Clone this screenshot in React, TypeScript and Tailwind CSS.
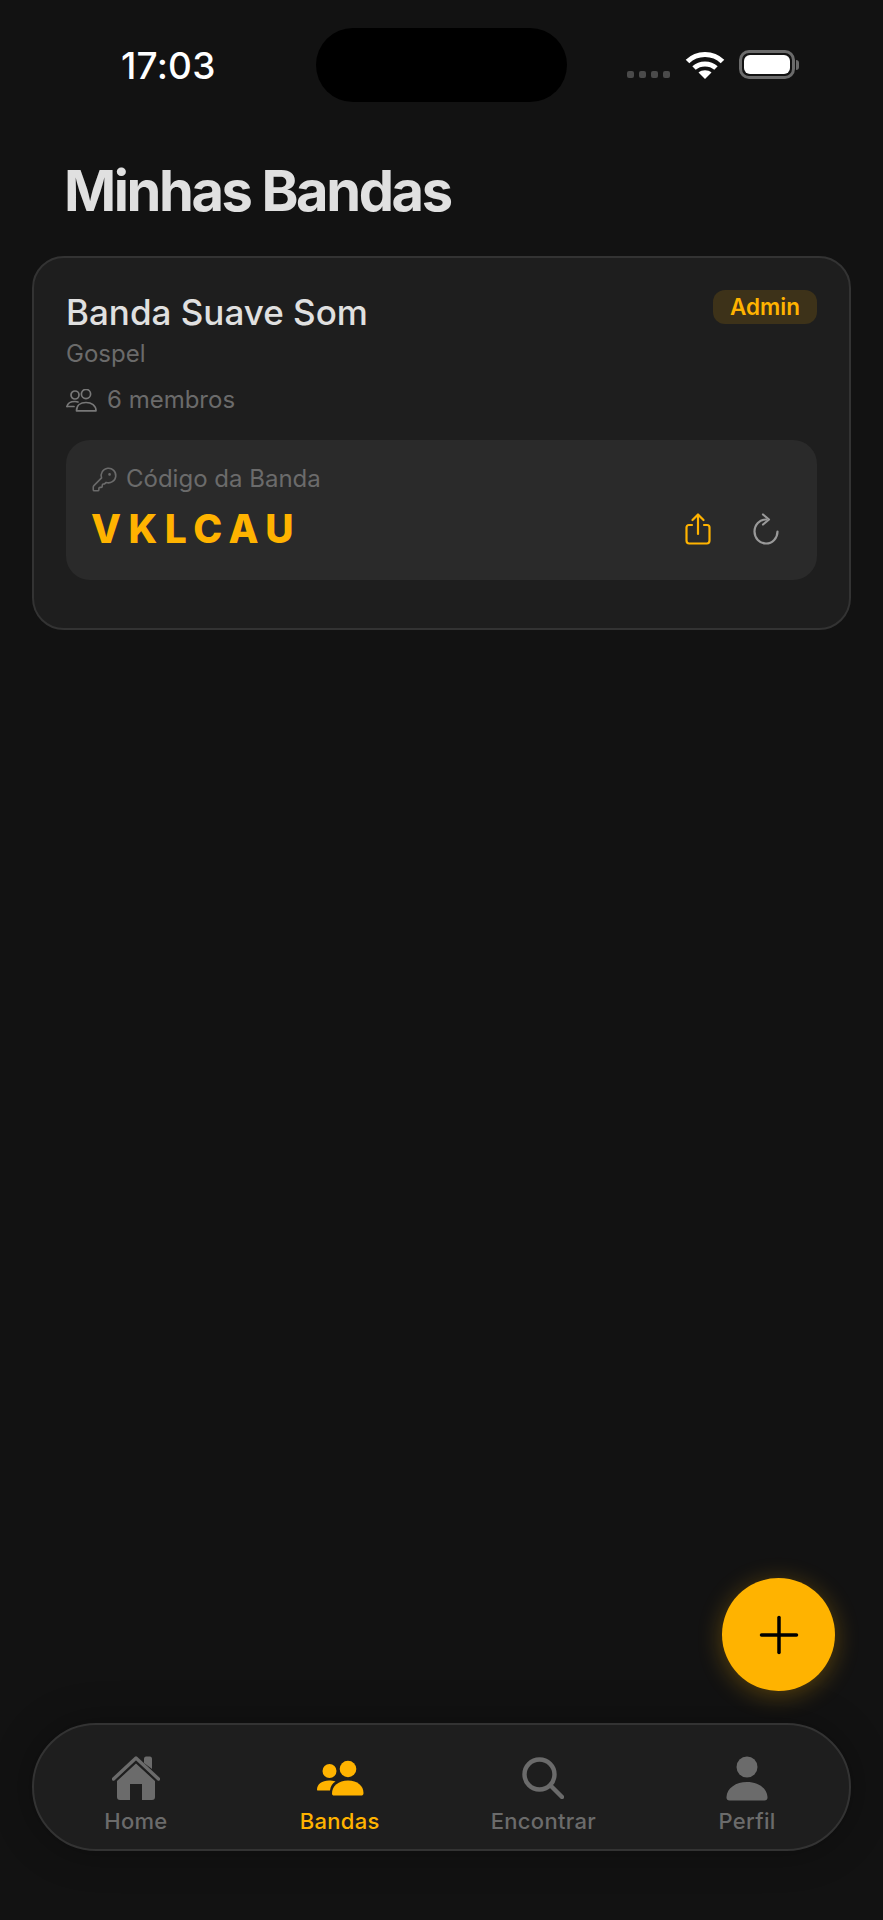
import { KeyRound, Plus } from 'lucide-react';

function WifiIcon() {
  return (
    <svg width="40" height="28" viewBox="0 0 40 28" fill="none" stroke="white" strokeWidth="5">
      <path d="M2.5 10.5C12 1 28 1 37.5 10.5" />
      <path d="M9 17C15 11.5 25 11.5 31 17" />
      <path d="M20 28L13.5 21.5C17 18.5 23 18.5 26.5 21.5Z" fill="white" stroke="none" />
    </svg>
  );
}

function BatteryIcon() {
  return (
    <div className="flex items-center">
      <div className="flex h-[29px] w-[56px] items-center justify-center rounded-[10px] border-[3px] border-[#6b6b6b]">
        <div className="h-[19px] w-[46px] rounded-[6px] bg-white" />
      </div>
      <div className="ml-[1px] h-[10px] w-[3px] rounded-r-sm bg-[#6b6b6b]" />
    </div>
  );
}

function MembersIcon() {
  return (
    <svg width="31" height="23" viewBox="0 0 31 23" fill="none" stroke="#787878" strokeWidth="1.7">
      <circle cx="9" cy="6" r="4" />
      <circle cx="20" cy="5" r="4.6" />
      <path d="M1 17.5C1.6 14 5 12.5 9 12.5C10 12.5 11 12.6 12 13" strokeLinecap="round" />
      <path d="M1 17.5H8" strokeLinecap="round" />
      <path d="M10.5 21.8C10.5 16.5 14.5 13.5 20 13.5C25.5 13.5 30 16.5 30 21.8Z" strokeLinejoin="round" />
    </svg>
  );
}

function ShareIcon() {
  return (
    <svg width="26" height="32" viewBox="0 0 26 32" fill="none" stroke="#ffb300" strokeWidth="2.2" strokeLinecap="round" strokeLinejoin="round">
      <path d="M7 12H4C2.4 12 1.5 13 1.5 14.5V27.5C1.5 29.5 2.5 30.5 4.2 30.5H21.8C23.5 30.5 24.5 29.5 24.5 27.5V14.5C24.5 13 23.6 12 22 12H19" />
      <path d="M13 21V2" />
      <path d="M7.5 7L13 1.5L18.500 7" />
    </svg>
  );
}

function RefreshIcon() {
  return (
    <svg width="26" height="32" viewBox="0 0 26 32" fill="none" stroke="#999999" strokeWidth="2.2" strokeLinecap="round" strokeLinejoin="round">
      <path d="M13 6.500C6.500 6.500 1.500 11.700 1.500 18.500C1.500 25 6.500 30.500 13 30.500C19.500 30.500 24.500 25 24.500 18.500" />
      <path d="M10 1.500L16 6.500L10 11.500" />
    </svg>
  );
}

function HomeIcon() {
  return (
    <svg width="48" height="46" viewBox="0 0 48 46" fill="#6b6b6b">
      <path d="M32 3.500C32 2.500 33 1.500 34 1.500H38C39 1.500 40 2.500 40 3.500V14L32 8Z" />
      <path d="M1.500 24L24 3L46.500 24" fill="none" stroke="#6b6b6b" strokeWidth="3.400" strokeLinecap="round" strokeLinejoin="round" />
      <path d="M24 8.500L43 26V42C43 44 42 45 40 45H30V29H18V45H8C6 45 5 44 5 42V26Z" />
    </svg>
  );
}

function BandsIcon() {
  return (
    <svg width="48" height="36" viewBox="0 0 48 36" fill="#ffb300">
      <circle cx="13.500" cy="11" r="7" />
      <circle cx="32" cy="9" r="8.300" />
      <path d="M1 30C1 24 6 20.500 13 20.500C15 20.500 17.500 20.800 19.500 21.500C16.500 23.500 14.500 26 14 30.500H3C1.800 30.500 1 30.500 1 30Z" />
      <path d="M16 33.500C16 26 22.500 20.500 32 20.500C41.500 20.500 47.500 26 47.500 33C47.500 35 46.500 35.500 45 35.500H18C16.800 35.500 16 35 16 33.500Z" />
    </svg>
  );
}

function SearchIcon() {
  return (
    <svg width="42" height="42" viewBox="0 0 42 42" fill="none" stroke="#6b6b6b" strokeWidth="4.400" strokeLinecap="round">
      <circle cx="17.500" cy="17.500" r="15" />
      <path d="M29 29L40 40" />
    </svg>
  );
}

function PersonIcon() {
  return (
    <svg width="42" height="45" viewBox="0 0 42 45" fill="#6b6b6b">
      <circle cx="21" cy="11" r="10.500" />
      <path d="M0.500 41C1 32 10 26 21 26C32 26 41 32 41.500 41C41.700 43.500 40.500 44.500 38.500 44.500H3.500C1.500 44.500 0.300 43.500 0.500 41Z" />
    </svg>
  );
}

const tabs = [
  { label: 'Home', icon: <HomeIcon />, active: false },
  { label: 'Bandas', icon: <BandsIcon />, active: true },
  { label: 'Encontrar', icon: <SearchIcon />, active: false },
  { label: 'Perfil', icon: <PersonIcon />, active: false },
];

export default function App() {
  return (
    <div className="relative flex h-[1920px] w-[883px] flex-col overflow-hidden bg-[#121212] font-['Inter',sans-serif]">
      {/* status bar */}
      <div className="flex h-[102px] items-start pt-[28px]">
        <span className="ml-[121px] mt-[20px] w-[195px] text-[37px] leading-[36px] font-medium tracking-[0.200px] text-white">17:03</span>
        <div className="h-[74px] w-[251px] rounded-[37px] bg-black" />
        <div className="ml-[60px] mt-[22px] flex items-end">
          <div className="mb-[1px] flex gap-[5px]">
            <div className="h-[7px] w-[7px] rounded-[2px] bg-[#4a4a4a]" />
            <div className="h-[7px] w-[7px] rounded-[2px] bg-[#4a4a4a]" />
            <div className="h-[7px] w-[7px] rounded-[2px] bg-[#4a4a4a]" />
            <div className="h-[7px] w-[7px] rounded-[2px] bg-[#4a4a4a]" />
          </div>
          <div className="ml-[15px]"><WifiIcon /></div>
          <div className="ml-[14px]"><BatteryIcon /></div>
        </div>
      </div>

      <h1 className="ml-[64px] mt-[55px] text-[56px] leading-[68px] font-bold tracking-[-2.400px] text-[#e0e0e0]">Minhas Bandas</h1>

      {/* band card */}
      <div className="mx-[32px] mt-[31px] rounded-[32px] border-2 border-[#333333] bg-[#1e1e1e] px-[32px] pb-[48px] pt-[32px]">
        <div className="flex items-start justify-between">
          <div>
            <h2 className="text-[35px] leading-[44px] font-medium text-[#e0e0e0]">Banda Suave Som</h2>
            <p className="mt-[5px] text-[24px] leading-[30px] text-[#6b6b6b]">Gospel</p>
          </div>
          <span className="flex h-[34px] w-[104px] items-center justify-center rounded-[12px] bg-[#3d3219] text-[22.500px] font-semibold text-[#ffb300]">Admin</span>
        </div>
        <div className="mt-[16px] flex items-center gap-[10px] text-[24px] leading-[30px] text-[#6b6b6b]">
          <MembersIcon />
          <span>6 membros</span>
        </div>
        <div className="mt-[25px] rounded-[24px] bg-[#2a2a2a] px-[25px] pb-[27px] pt-[24px]">
          <div className="flex items-center gap-[8px] text-[24px] leading-[30px] text-[#6b6b6b]">
            <KeyRound size={27} strokeWidth={1.400} />
            <span>Código da Banda</span>
          </div>
          <div className="mt-[11px] flex items-center justify-between">
            <span className="text-[39px] leading-[48px] font-extrabold tracking-[7.500px] text-[#ffb300]">VKLCAU</span>
            <div className="mr-[13px] flex items-center gap-[42px]">
              <ShareIcon />
              <RefreshIcon />
            </div>
          </div>
        </div>
      </div>

      {/* bottom tabs */}
      <nav className="mx-[32px] mb-[69px] mt-auto grid h-[128px] grid-cols-4 rounded-[64px] border-2 border-[#333333] bg-[#1e1e1e] shadow-[0_0_40px_rgba(0,0,0,0.3)]">
        {tabs.map((tab) => (
          <div key={tab.label} className="flex flex-col items-center pt-[30px]">
            <div className="flex h-[46px] items-center justify-center">{tab.icon}</div>
            <span className={`mt-[6px] text-[22px] leading-[28px] font-medium tracking-[0.300px] ${tab.active ? 'text-[#ffb300]' : 'text-[#6b6b6b]'}`}>{tab.label}</span>
          </div>
        ))}
      </nav>

      {/* add band button */}
      <button className="absolute bottom-[229px] right-[48px] flex h-[113px] w-[113px] items-center justify-center rounded-full bg-[#ffb300] shadow-[0_4px_24px_rgba(255,179,0,0.3)]">
        <Plus size={60} strokeWidth={1.400} color="#000000" />
      </button>
    </div>
  );
}
